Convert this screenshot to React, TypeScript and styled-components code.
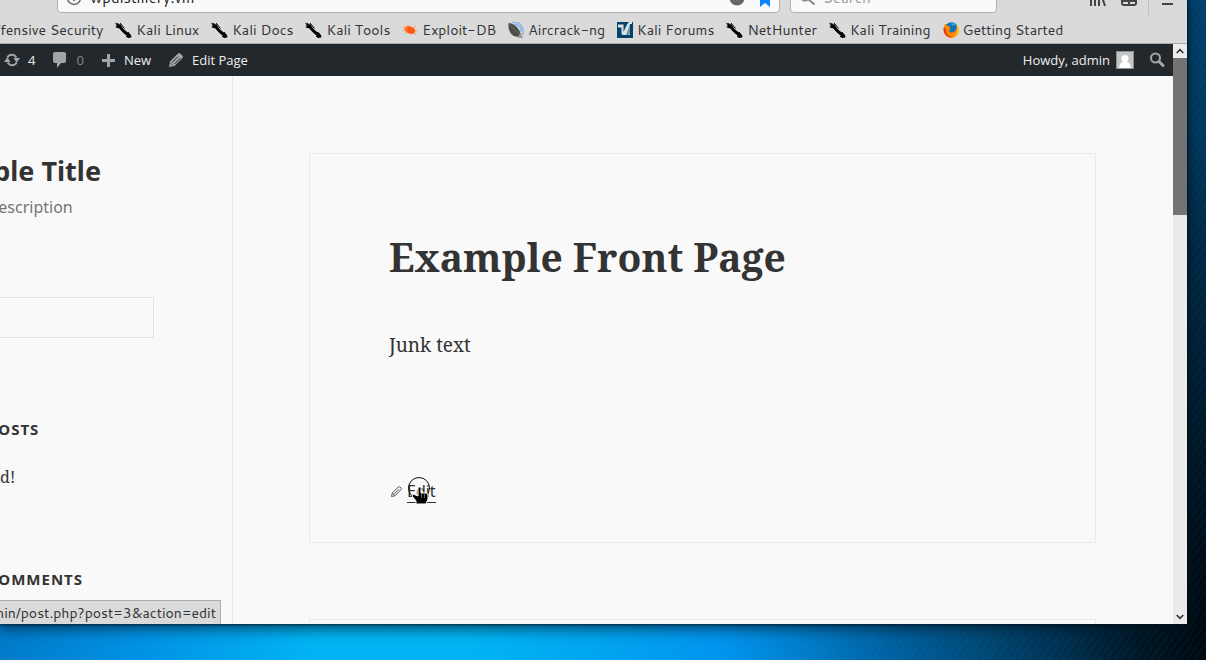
import React from "react";
import styled, { createGlobalStyle } from "styled-components";

const ui = `"Cantarell", "Noto Sans", sans-serif`;
const serif = `"Noto Serif", "Droid Serif", "DejaVu Serif Condensed", "DejaVu Serif", serif`;
const sans = `"Noto Sans", sans-serif`;

const Global = createGlobalStyle`
  * { box-sizing: border-box; }
  body { margin: 0; overflow: hidden; }
  a { color: inherit; text-decoration: none; }
  h1, h2, p { margin: 0; }
  button { border: 0; background: none; padding: 0; color: inherit; font: inherit; }
  svg { display: block; flex: none; }
`;

const Desktop = styled.div`
  display: flex;
  height: 100vh;
  padding: 0 19px 36px 0;
  background:
    repeating-linear-gradient(125deg, rgba(60, 190, 255, 0.04) 0 2px, transparent 2px 6px),
    linear-gradient(180deg, #00426e 0, #003a60 130px, #002a48 240px, #001a2c 420px, #000d18 560px, transparent 624px) right / 19px 100% no-repeat,
    linear-gradient(90deg, #007ac8 0, #0090e4 11%, #00b4f4 26%, #00b4f4 39%, #00a4f0 50%, #0094ee 60%, #007cc8 67%, #0060a0 74%, #004a78 81%, #003050 88%, #001828 94%, #00080f 100%);
`;

const Browser = styled.div`
  position: relative;
  display: flex;
  flex: 1;
  min-width: 0;
  flex-direction: column;
  overflow: hidden;
  background: #f9f9f9;
`;

const Frame = styled.div`
  display: flex;
  flex: 1;
  min-width: 0;
  box-shadow: 0 0 2px 1px rgba(0, 10, 20, 0.6), 0 3px 14px 1px rgba(0, 20, 30, 0.7);
`;

const Toolbar = styled.div`
  display: flex;
  align-items: flex-end;
  height: 17px;
  flex: none;
  padding: 0 13px 4px 57px;
  overflow: hidden;
  background: #dadada;
`;

const Field = styled.label<{ $grow?: boolean }>`
  display: flex;
  align-items: center;
  gap: 8px;
  flex: ${(p) => (p.$grow ? "1" : "0 0 207px")};
  height: 30px;
  padding: 0 2px 0 8px;
  margin-right: ${(p) => (p.$grow ? "10px" : "0")};
  border: 1px solid #b0b0b0;
  border-radius: 4px;
  background: #fafafa;
`;

const FieldInput = styled.input`
  flex: 1;
  min-width: 0;
  padding: 0;
  border: 0;
  outline: 0;
  background: transparent;
  color: #222;
  font: 15px/20px ${ui};
  &::placeholder { color: #999; opacity: 1; }
`;

const Tools = styled.div`
  display: flex;
  align-items: flex-end;
  gap: 14px;
  height: 34px;
  margin-left: 92px;
  padding-bottom: 6px;
`;

const Divider = styled.span`
  width: 1px;
  height: 30px;
  margin: 0 -2px -8px -3px;
  background: #c0c0c0;
`;

const Bookmarks = styled.nav`
  display: flex;
  align-items: center;
  gap: 12px;
  flex: none;
  height: 27px;
  margin-left: -38px;
  border-bottom: 1px solid #aaa;
  background: #dadada;
  color: #303436;
  font: 14px/20px ${ui};
  white-space: nowrap;
`;

const Bookmark = styled.a`
  display: flex;
  align-items: center;
  gap: 4px;
`;

const Viewport = styled.div`
  display: flex;
  flex: 1;
  min-height: 0;
`;

const Page = styled.div`
  display: flex;
  flex: 1;
  min-width: 0;
  flex-direction: column;
  overflow: hidden;
`;

const AdminBar = styled.header`
  display: flex;
  align-items: center;
  flex: none;
  height: 32px;
  padding: 0 8px 0 4px;
  background: #23282d;
  font: 13px/32px "Open Sans", sans-serif;
`;

const AdminItem = styled.a<{ $gap?: number; $dim?: boolean }>`
  display: flex;
  align-items: center;
  gap: ${(p) => p.$gap ?? 8}px;
  margin-right: 16px;
  color: ${(p) => (p.$dim ? "#82878c" : "#eee")};
`;

const Spacer = styled.span`
  flex: 1;
`;

const Columns = styled.div`
  display: flex;
  flex: 1;
  min-height: 0;
`;

const Sidebar = styled.aside`
  flex: 0 0 313px;
  margin-left: -80px;
  padding: 77px 78px 0 0;
  border-right: 1px solid #e8e8e8;
  color: #333;
  font-family: ${sans};
  white-space: nowrap;
`;

const SiteTitle = styled.h1`
  font: bold 27px/36px ${sans};
`;

const Description = styled.p`
  margin-top: 6px;
  color: #757575;
  font: 16px/24px ${sans};
`;

const SearchBox = styled.input`
  display: block;
  width: 100%;
  height: 41px;
  margin-top: 78px;
  border: 1px solid #e2e2e2;
  background: #f9f9f9;
`;

const WidgetTitle = styled.h2<{ $first?: boolean }>`
  margin-top: ${(p) => (p.$first ? 79 : 78)}px;
  font: bold 15px/24px ${sans};
  letter-spacing: 1px;
  text-transform: uppercase;
`;

const PostLink = styled.a`
  display: block;
  margin-top: 24px;
  font: 16px/24px ${serif};
`;

const Main = styled.main`
  display: flex;
  flex: 1;
  flex-direction: column;
  gap: 76px;
  min-width: 0;
  padding: 77px 77px 0 76px;
  overflow: hidden;
`;

const Article = styled.article`
  flex: none;
  height: 390px;
  padding: 79px;
  border: 1px solid #eaeaea;
  color: #333;
`;

const ArticleTitle = styled.h2`
  font: bold 39px/48px ${serif};
  white-space: nowrap;
`;

const Body = styled.p`
  margin-top: 48px;
  font: 19px/32px ${serif};
`;

const EditRow = styled.div`
  position: relative;
  display: flex;
  align-items: center;
  gap: 4px;
  margin-top: 119px;
`;

const EditLink = styled.a`
  border-bottom: 1px solid #333;
  font: 16px/22px ${sans};
`;

const Cursor = styled.svg`
  position: absolute;
  left: 17px;
  top: -3px;
`;

const ScrollTrack = styled.div`
  display: flex;
  flex: 0 0 14px;
  flex-direction: column;
  background: #ebebeb;
`;

const ScrollButton = styled.button`
  display: flex;
  align-items: center;
  justify-content: center;
  width: 14px;
  height: 14px;
`;

const ScrollThumb = styled.div`
  height: 157px;
  background: #737373;
`;

const StatusBar = styled.div`
  position: absolute;
  bottom: 0;
  left: 0;
  display: flex;
  justify-content: flex-end;
  width: 221px;
  height: 24px;
  padding-right: 4px;
  overflow: hidden;
  border: 1px solid #aaa;
  border-width: 1px 1px 0 0;
  background: #dadada;
  color: #303436;
  font: 14px/24px ${ui};
  white-space: nowrap;
`;

const Kali = () => (
  <svg width="17" height="16" viewBox="0 0 17 16" fill="#000">
    <path d="M0 .5l2 1 1-.5 1 1.500 1.500-.5 1.500 3 2 2.500 2.500 2 3.500 2.500 1.500 2-.5 1.500-3 .5-1.500-2.500-2.500-2-3-3-1.500-2-4-1 1.500-.7L0 4l1.800-.2z" />
    <path d="M5 1l4.500 5.500M11 14l1.500 1.500M13 10l2 3" stroke="#000" strokeWidth="1" />
  </svg>
);

const ExploitDb = () => (
  <svg width="16" height="16" viewBox="0 0 16 16">
    <ellipse cx="8" cy="8" rx="5.500" ry="3.600" transform="rotate(22 8 8)" fill="#ff5a0a" />
    <path d="M.5 5.500l5 1M.5 8.500h5M3 11.500l3-1.500M5 2.500l3 3M2.500 3.500l3 3M11 6l3-2.500M12 9l3 0M11 11l3 2M8 11l1 2" stroke="#ff8a50" strokeWidth=".8" />
  </svg>
);

const Aircrack = () => (
  <svg width="16" height="16" viewBox="0 0 16 16">
    <path d="M4 .8c7-2 12 3 11 12M6 2.500c5-.5 7 3 7 7.500" fill="none" stroke="#8eb4ea" strokeWidth="1.500" />
    <path d="M.5 1c5 0 11 5 13 13-7 3-14-2-13-13z" fill="#4b4d48" />
    <path d="M1 2l12 12" stroke="#777970" strokeWidth=".6" />
    <path d="M11 13l2-2 2 5h-5z" fill="#999" />
  </svg>
);

const Forums = () => (
  <svg width="16" height="16" viewBox="0 0 16 16">
    <path d="M0 0h16v16H0z" fill="#00436b" />
    <path d="M1 2.500h5.500V10L10 2.500 12 0h3v2h-2v11H6L4.500 12V5.500H1z" fill="#dfe3e3" />
    <path d="M13 2v9.500L11.500 13H9z" fill="#6f96ab" />
  </svg>
);

const Firefox = () => (
  <svg width="16" height="16" viewBox="0 0 16 16">
    <circle cx="8.500" cy="7" r="6.800" fill="#0b74b8" />
    <path d="M8 1c3 0 5 1 6 3l-3-1-2 1z" fill="#36a9e0" />
    <path d="M2 1.500l1.500 2 3.500.5-1 2 2 1-2 1.500c1 3 5 2.500 7-.5 1-2 .5-4 0-6 4 4 3.500 9 .5 12-4 3-10 2-12-2-1.500-3-1-7 .5-10.500z" fill="#ff8a00" />
    <path d="M1 5c-2 6 4 11.500 9 10.500-4-1-7-4-7-8z" fill="#e63b19" />
    <path d="M13.500 3c3 4 2.500 8 0 10.500l-2.500 1.500c4-4 3.500-8 2.500-12z" fill="#ffd42a" />
  </svg>
);

const bookmarks: [string, React.FC][] = [
  ["Offensive Security", Kali],
  ["Kali Linux", Kali],
  ["Kali Docs", Kali],
  ["Kali Tools", Kali],
  ["Exploit-DB", ExploitDb],
  ["Aircrack-ng", Aircrack],
  ["Kali Forums", Forums],
  ["NetHunter", Kali],
  ["Kali Training", Kali],
  ["Getting Started", Firefox],
];

const AdminPencil = () => (
  <svg width="17" height="16" viewBox="0 0 17 16">
    <path d="M2 15l1-5.500L11 1.500q1-1 2.200 0l2.300 2.300q1 1 0 2.200L7.500 14z" fill="#a0a5aa" />
    <path d="M5 10.500l6-6M7.500 12l6-6" stroke="#23282d" strokeWidth="1" />
    <path d="M3.500 11l2.500 2.500" stroke="#23282d" strokeWidth=".6" />
  </svg>
);

const EditPencil = () => (
  <svg width="14" height="16" viewBox="0 0 14 16" fill="none" stroke="#555">
    <path d="M2.500 12.500l.8-3.500 6-6q.9-.7 1.700 0l1 1q.7.8 0 1.700l-6 6zM5 10.200l5-5" />
    <path d="M3.300 9l2.700 2.700" />
  </svg>
);

const Chevron = ({ down }: { down?: boolean }) => (
  <svg width="8" height="6" viewBox="0 0 8 6" fill="none" stroke="#333" strokeWidth="1.6">
    <path d={down ? "M.7 1L4 4.300 7.300 1" : "M.7 5L4 1.700 7.300 5"} />
  </svg>
);

export default function App() {
  return (
    <Desktop>
      <Global />
      <Frame>
        <Browser>
          <Toolbar>
            <Field $grow>
              <svg width="16" height="16" viewBox="0 0 16 16" fill="none" stroke="#666" strokeWidth="1.4">
                <circle cx="8" cy="8" r="6.500" />
                <path d="M8 7v4M8 4v2" strokeWidth="1.8" />
              </svg>
              <FieldInput aria-label="Address" defaultValue="wpdistillery.vm" />
              <svg width="16" height="16" viewBox="0 0 16 16">
                <circle cx="8" cy="8" r="7.500" fill="#666" />
                <path d="M5 6l3 3 3-3" stroke="#fff" strokeWidth="2" fill="none" />
              </svg>
              <svg width="24" height="18" viewBox="0 0 24 18">
                <path d="M12 1l2 5 6 1-3 4v7l-5-4-5 4v-7L4 7l6-1z" fill="#0a84ff" />
              </svg>
            </Field>
            <Field>
              <svg width="16" height="16" viewBox="0 0 16 16" fill="none" stroke="#888" strokeWidth="2">
                <circle cx="6" cy="6" r="4.500" />
                <path d="M9.500 9.500l6 5" />
              </svg>
              <FieldInput aria-label="Search the web" placeholder="Search" />
            </Field>
            <Tools>
              <button aria-label="Library">
                <svg width="18" height="16" viewBox="0 0 18 16" stroke="#444" strokeWidth="2">
                  <path d="M2 2v13M6 2v13M10 2v13M12 3l4 12" />
                </svg>
              </button>
              <button aria-label="Sidebars">
                <svg width="16" height="16" viewBox="0 0 16 16" fill="none" stroke="#444" strokeWidth="2">
                  <rect x="1" y="1" width="14" height="13" rx="2" />
                  <path d="M8 1v13M1 10h14" />
                </svg>
              </button>
              <Divider />
              <button aria-label="Menu">
                <svg width="13" height="16" viewBox="0 0 13 16" stroke="#444" strokeWidth="2">
                  <path d="M1 3h11M1 8h11M1 13h11" />
                </svg>
              </button>
            </Tools>
          </Toolbar>
          <Bookmarks>
            {bookmarks.map(([name, Icon]) => (
              <Bookmark key={name} href="#">
                <Icon />
                {name}
              </Bookmark>
            ))}
          </Bookmarks>
          <Viewport>
            <Page>
              <AdminBar>
                <AdminItem href="#">
                  <svg width="16" height="16" viewBox="0 0 17 16" fill="none" stroke="#a0a5aa" strokeWidth="2.200">
                    <path d="M3.500 5.500c2-4 7.500-4 9.500 0M13.500 10.500c-2 4-7.500 4-9.500 0" />
                    <path d="M10 6h7l-3.500 5zM0 10h7L3.500 5z" fill="#a0a5aa" stroke="none" />
                  </svg>
                  4
                </AdminItem>
                <AdminItem href="#" $gap={8} $dim>
                  <svg width="17" height="16" viewBox="0 0 17 16">
                    <path d="M4 0h9q2 0 2 2v7q0 2-2 2h-3l-4 5v-5H4Q2 11 2 9V2q0-2 2-2z" fill="#a0a5aa" />
                  </svg>
                  0
                </AdminItem>
                <AdminItem href="#">
                  <svg width="16" height="14" viewBox="0 0 16 14">
                    <path d="M7 1h3v5h5v3h-5v5H7V9H2V6h5z" fill="#a0a5aa" />
                  </svg>
                  New
                </AdminItem>
                <AdminItem href="#">
                  <AdminPencil />
                  Edit Page
                </AdminItem>
                <Spacer />
                <AdminItem href="#" $gap={6}>
                  Howdy, admin
                  <svg width="18" height="18" viewBox="0 0 18 18">
                    <path d="M0 0h18v18H0z" fill="#8b8f92" />
                    <path d="M1 1h16v16H1z" fill="#c5c5c5" />
                    <path d="M9 4c4.500 0 4.500 4.500 2 6.500 2.500 1 3.500 3 4 6.500H3c.5-3.500 1.500-5.500 4-6.500C4.500 8.500 4.500 4 9 4z" fill="#fff" />
                  </svg>
                </AdminItem>
                <button aria-label="Search">
                  <svg width="15" height="16" viewBox="0 0 15 16" fill="none" stroke="#a0a5aa" strokeWidth="2">
                    <circle cx="5.500" cy="6" r="4.500" />
                    <path d="M9 9.500l4 4" strokeWidth="3" strokeLinecap="round" />
                  </svg>
                </button>
              </AdminBar>
              <Columns>
                <Sidebar>
                  <SiteTitle>Example Title</SiteTitle>
                  <Description>Example description</Description>
                  <SearchBox type="search" aria-label="Search this site" />
                  <WidgetTitle $first>Recent Posts</WidgetTitle>
                  <PostLink href="#">Hello world!</PostLink>
                  <WidgetTitle>Recent Comments</WidgetTitle>
                </Sidebar>
                <Main>
                  <Article>
                    <ArticleTitle>Example Front Page</ArticleTitle>
                    <Body>Junk text</Body>
                    <EditRow>
                      <EditPencil />
                      <EditLink href="#">Edit</EditLink>
                      <Cursor width="26" height="30" viewBox="0 0 26 30">
                        <circle cx="13" cy="11" r="10.500" fill="none" stroke="#111" />
                        <path d="M12 10h3v6h5q2 0 2 2v4l-2 5H10v-3l-4-5 1-2 5 2z" fill="#000" stroke="#fff" />
                        <path d="M15.500 17v4M18.500 17v4" stroke="#777" strokeWidth=".8" />
                      </Cursor>
                    </EditRow>
                  </Article>
                  <Article />
                </Main>
              </Columns>
            </Page>
            <ScrollTrack>
              <ScrollButton aria-label="Scroll up"><Chevron /></ScrollButton>
              <ScrollThumb />
              <Spacer />
              <ScrollButton aria-label="Scroll down"><Chevron down /></ScrollButton>
            </ScrollTrack>
          </Viewport>
          <StatusBar>wp-admin/post.php?post=3&amp;action=edit</StatusBar>
        </Browser>
      </Frame>
    </Desktop>
  );
}
